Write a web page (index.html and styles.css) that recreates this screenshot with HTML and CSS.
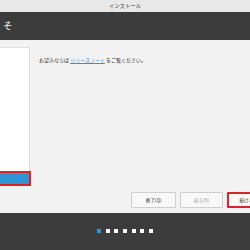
FILE: index.html
```html
<!DOCTYPE html>
<html lang="ja">
<head>
<meta charset="utf-8">
<link rel="stylesheet" href="styles.css">
</head>
<body>
<div class="window">
  <div class="titlebar">インストール</div>
  <div class="header"><span class="heading">そ</span></div>
  <div class="main">
    <div class="side">
      <div class="list"></div>
      <div class="selected"></div>
    </div>
    <div class="content">
      <p class="note">お望みならば <a class="link">リリースノート</a> をご覧ください。</p>
      <div class="buttons">
        <button class="btn">終了(Q)</button>
        <button class="btn disabled">戻る(B)</button>
        <button class="btn focus">続ける(N)</button>
      </div>
    </div>
  </div>
  <div class="footer">
    <div class="dots">
      <span class="dot active"></span>
      <span class="dot"></span>
      <span class="dot"></span>
      <span class="dot"></span>
      <span class="dot"></span>
      <span class="dot"></span>
      <span class="dot"></span>
    </div>
  </div>
</div>
</body>
</html>
```

FILE: styles.css
```css
html, body {
  margin: 0;
  padding: 0;
}
body {
  width: 250px;
  height: 250px;
  overflow: hidden;
  font-family: "Noto Sans CJK JP", "Noto Sans", sans-serif;
  background: #f2f2f2;
}
.window {
  display: flex;
  flex-direction: column;
  width: 250px;
  height: 250px;
}
.titlebar {
  height: 12px;
  line-height: 12px;
  background: #e8e8e8;
  color: #3a3a3a;
  font-size: 5.4px;
  text-align: center;
}
.header {
  height: 28px;
  background: #3c3c3c;
  display: flex;
  align-items: center;
  padding-left: 3px;
}
.heading {
  color: #f4f4f4;
  font-size: 9.5px;
  line-height: 1;
}
.main {
  height: 173px;
  display: flex;
  background: #f2f2f2;
}
.side {
  width: 32px;
  display: flex;
  flex-direction: column;
  padding-top: 7px;
}
.list {
  width: 29px;
  height: 123px;
  background: #fff;
  border-top: 1px solid #e2e2e2;
  border-right: 1px solid #dcdcdc;
}
.selected {
  width: 29px;
  height: 11px;
  background: #2e95d7;
  border: 2px solid #d8252c;
  margin-left: -2px;
  margin-top: 0;
}
.content {
  flex: 1;
  display: flex;
  flex-direction: column;
  padding: 16px 0 5px 8px;
}
.note {
  margin: 0;
  font-size: 5px;
  line-height: 7px;
  color: #333;
  white-space: nowrap;
  flex: 1;
}
.link {
  color: #3d8fd1;
  text-decoration: underline;
}
.buttons {
  display: flex;
  gap: 4px;
  padding-left: 92px;
}
.btn {
  flex: none;
  width: 45px;
  height: 16px;
  padding: 0;
  background: #f8f8f8;
  border: 1px solid #cfcfcf;
  border-radius: 1px;
  font-family: inherit;
  font-size: 4.6px;
  color: #333;
}
.btn + .btn {
  width: 43px;
}
.btn.disabled {
  color: #a0a0a0;
}
.btn.focus {
  width: 45px;
  border: 2px solid #d8252c;
}
.footer {
  height: 37px;
  background: #3c3c3c;
  display: flex;
  justify-content: center;
}
.dots {
  display: flex;
  gap: 4.6px;
  margin-top: 16px;
  height: 5px;
  padding-left: 0;
}
.dot {
  width: 4px;
  height: 4px;
  background: #fafafa;
}
.dot.active {
  background: #2e95d7;
}
```
